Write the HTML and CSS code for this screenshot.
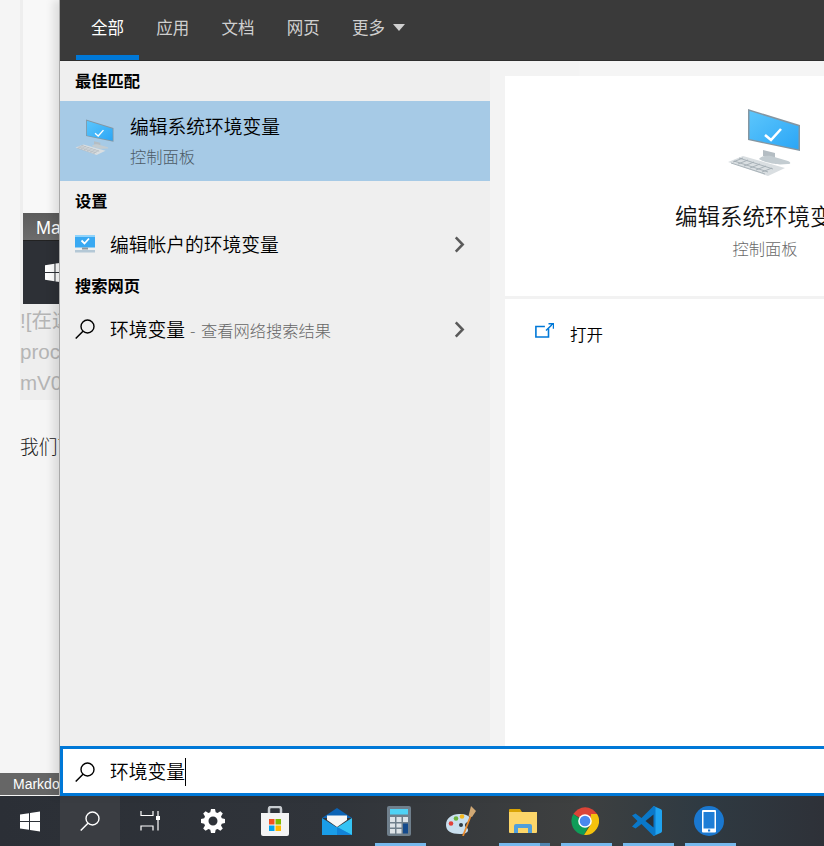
FILE: index.html
```html
<!DOCTYPE html>
<html lang="zh-CN">
<head>
<meta charset="utf-8">
<title>搜索</title>
<link rel="stylesheet" href="styles.css">
</head>
<body>
<svg class="defs" width="0" height="0" aria-hidden="true">
  <defs>
    <linearGradient id="scr" x1="0" y1="0" x2="1" y2="1"><stop offset="0" stop-color="#5cc6fc"/><stop offset="1" stop-color="#2ba6f6"/></linearGradient>
    <symbol id="pc" viewBox="0 0 74 68">
      <path d="M36 42l12 3v6l-12-3z" fill="#b4bdc3"/>
      <path d="M32 51c2-3 8-4 12-3l17 5c3 1 3 3 0 3l-8 0.500c-4 0-16-2-21-5.500z" fill="#c3ccd1"/>
      <path d="M21 1l52 16v26l-52-11z" fill="#8496a2"/>
      <path d="M22.500 3l49 15.300v23l-49-10.300z" fill="url(#scr)"/>
      <path d="M38 27l6 5 10-11" fill="none" stroke="#fff" stroke-width="2.600"/>
      <path d="M1 54l15-6 42 12-17 8z" fill="#d9dee1"/>
      <path d="M6 54l10-4M11 56l10-4M17 58l10-4M23 60l10-4M29 62l10-4M35 64l10-4M12 50l34 11M7 53l34 11M4 55l34 11" stroke="#a3adb3" stroke-width=".9"/>
    </symbol>
    <symbol id="mag" viewBox="0 0 20 20">
      <circle cx="12.500" cy="7.500" r="6.500" fill="none" stroke="currentColor" stroke-width="1.400"/>
      <path d="M8 12.200L.7 19.500" stroke="currentColor" stroke-width="1.500"/>
    </symbol>
    <symbol id="chev" viewBox="0 0 10 16">
      <path d="M1.500 1.200L8 8l-6.500 6.800" fill="none" stroke="currentColor" stroke-width="2.400"/>
    </symbol>
  </defs>
</svg>
<div class="screen">
  <div class="desktop">
    <div class="doc">
      <div class="block">
        <div class="shot">
          <div class="shot-title">Markdown</div>
          <div class="shot-body">
            <svg class="shot-win" viewBox="0 0 20 20"><path d="M0 3l9-1.300V9.500H0zM10 1.500L20 0v9.500H10zM0 10.500h9v7.800L0 17zM10 10.500h10V20l-10-1.500z" fill="#fff"/></svg>
          </div>
        </div>
        <div class="code-line">![在这里</div>
        <div class="code-line">proc</div>
        <div class="code-line">mV0</div>
      </div>
      <p class="para">我们可以</p>
      <div class="status">Markdown</div>
    </div>

    <div class="panel">
      <nav class="tabs">
        <span class="tab active">全部</span>
        <span class="tab">应用</span>
        <span class="tab">文档</span>
        <span class="tab">网页</span>
        <span class="tab">更多<i class="caret-down"></i></span>
      </nav>
      <div class="results">
        <section class="list">
          <h2 class="group first">最佳匹配</h2>
          <div class="best">
            <svg class="best-icon"><use href="#pc"/></svg>
            <div class="best-text">
              <div class="best-title">编辑系统环境变量</div>
              <div class="best-sub">控制面板</div>
            </div>
          </div>
          <h2 class="group">设置</h2>
          <div class="row">
            <svg class="row-icon" viewBox="0 0 20 18">
              <rect x="0" y="0" width="20" height="12.500" fill="#39a9f2"/>
              <rect x="0" y="0" width="20" height="2" fill="#8fd3fb"/>
              <path d="M6.500 5.500l3 3 4.500-5" fill="none" stroke="#fff" stroke-width="1.800"/>
              <rect x="7" y="12.500" width="6" height="2" fill="#8d99a1"/>
              <rect x="0" y="15" width="20" height="2.500" fill="#b4c8d6"/>
            </svg>
            <span class="row-title">编辑帐户的环境变量</span>
            <svg class="chev"><use href="#chev"/></svg>
          </div>
          <h2 class="group tight">搜索网页</h2>
          <div class="row">
            <svg class="row-icon mag"><use href="#mag"/></svg>
            <span class="row-title">环境变量</span>
            <span class="row-hint">- 查看网络搜索结果</span>
            <svg class="chev"><use href="#chev"/></svg>
          </div>
        </section>
        <section class="detail">
          <div class="hero">
            <svg class="hero-icon"><use href="#pc"/></svg>
            <div class="hero-title">编辑系统环境变量</div>
            <div class="hero-sub">控制面板</div>
          </div>
          <div class="actions">
            <div class="action">
              <svg class="open-icon" viewBox="0 0 19 15">
                <path d="M13.500 5.500v8.500H.9V3.500h9" fill="none" stroke="#0078d7" stroke-width="1.600"/>
                <path d="M11 7.500L18 .8M13.500.7h5v5" fill="none" stroke="#0078d7" stroke-width="1.500"/>
              </svg>
              <span>打开</span>
            </div>
          </div>
        </section>
      </div>
      <div class="searchbox">
        <svg class="search-mag"><use href="#mag"/></svg>
        <span class="query">环境变量</span><i class="cursor"></i>
      </div>
    </div>
  </div>

  <footer class="taskbar">
    <div class="tb start">
      <svg width="20" height="21" viewBox="0 0 20 20"><path d="M0 3l9-1.300V9.500H0zM10 1.500L20 0v9.500H10zM0 10.500h9v7.800L0 17zM10 10.500h10V20l-10-1.500z" fill="#fff"/></svg>
    </div>
    <div class="tb search-btn">
      <svg class="tb-mag"><use href="#mag"/></svg>
    </div>
    <div class="tb">
      <svg width="20" height="20" viewBox="0 0 20 20" fill="none" stroke="#fff" stroke-width="1.200">
        <path d="M1 0v4.500M13 0v4.500M.4 4.500h13.200M.4 15h13.200M1 15v4.500M13 15v4.500M18 0v5M18 9v10.500"/>
        <rect x="16" y="5" width="4" height="4" fill="#fff" stroke="none"/>
      </svg>
    </div>
    <div class="apps">
      <div class="app">
        <svg width="24" height="24" viewBox="0 0 24 24"><path fill="#fff" fill-rule="evenodd" d="M10 0h4l.7 3.200 1.900.8L19.400 2.200l2.400 2.400-1.800 2.800.8 1.900 3.200.7v4l-3.200.7-.8 1.900 1.800 2.800-2.400 2.400-2.800-1.800-1.900.8L14 24h-4l-.7-3.200-1.900-.8-2.800 1.800-2.400-2.400L4 16.600l-.8-1.900L0 14v-4l3.200-.7.8-1.900-1.800-2.800 2.400-2.400L7.400 4l1.900-.8zM12 7.500a4.500 4.500 0 1 0 0 9 4.500 4.500 0 0 0 0-9z"/></svg>
      </div>
      <div class="app">
        <svg width="30" height="30" viewBox="0 0 30 30">
          <path d="M9 7V3q0-2 2-2h8q2 0 2 2v4" fill="none" stroke="#c8ccd0" stroke-width="2.500"/>
          <path d="M1 7h28v21q0 2-2 2H3q-2 0-2-2z" fill="#f4f4f4"/>
          <rect x="9" y="13" width="5.500" height="5.500" fill="#f25022"/>
          <rect x="15.500" y="13" width="5.500" height="5.500" fill="#7fba00"/>
          <rect x="9" y="19.500" width="5.500" height="5.500" fill="#00a4ef"/>
          <rect x="15.500" y="19.500" width="5.500" height="5.500" fill="#ffb900"/>
        </svg>
      </div>
      <div class="app">
        <svg width="30" height="27" viewBox="0 0 30 27">
          <path d="M0 10L15 0l15 10z" fill="#0b63b5"/>
          <path d="M5 7.500h20V12l-10 7L5 12z" fill="#f6f6f6"/>
          <path d="M0 10l15 9.500V27H0z" fill="#1a9de8"/>
          <path d="M30 10L15 19.500V27h15z" fill="#35c4f5"/>
          <path d="M0 27l15-8 15 8z" fill="#1a9de8"/>
          <path d="M15 19L30 27H15z" fill="#1283d8"/>
        </svg>
      </div>
      <div class="app running">
        <svg width="24" height="30" viewBox="0 0 24 30">
          <rect width="24" height="30" rx="2" fill="#6f7f8c"/>
          <rect x="3" y="3" width="18" height="5.500" fill="#4fd2f5"/>
          <g fill="#dde3e8">
            <rect x="3" y="11" width="5" height="5"/><rect x="9.500" y="11" width="5" height="5"/><rect x="16" y="11" width="5" height="5"/>
            <rect x="3" y="17.500" width="5" height="4"/><rect x="9.500" y="17.500" width="5" height="4"/>
            <rect x="3" y="23" width="5" height="4.500"/><rect x="9.500" y="23" width="5" height="4.500"/>
          </g>
          <rect x="16" y="17.500" width="5" height="10" fill="#144a8c"/>
        </svg>
      </div>
      <div class="app">
        <svg width="30" height="30" viewBox="0 0 30 30">
          <path d="M0 19C0 12 6 8 13 8c7 0 11 2 11 5 0 3-5 3-5 6s3 2 3 5-4 4-8 4C5 28 0 25 0 19z" fill="#c9dfee"/>
          <circle cx="5" cy="17.500" r="2.300" fill="#e0413a"/>
          <circle cx="10" cy="12.500" r="2.300" fill="#6cb33f"/>
          <circle cx="16" cy="10.500" r="2.300" fill="#f5b81e"/>
          <circle cx="15" cy="19" r="2" fill="#2f3a42"/>
          <path d="M17 30L25 9" stroke="#e88a2e" stroke-width="1.800"/>
          <path d="M22.500 10L25 0l5 5-4 6z" fill="#d0a874"/>
        </svg>
      </div>
      <div class="app running split">
        <svg width="28" height="24" viewBox="0 0 28 24">
          <path d="M0 1q0-1 1-1h10l2 3H0z" fill="#d9a404"/>
          <path d="M0 3h28v20q0 1-1 1H1q-1 0-1-1z" fill="#fcd669"/>
          <path d="M5 24v-7q0-2 2-2h14q2 0 2 2v7h-4v-5H9v5z" fill="#4f9fdc"/>
        </svg>
      </div>
      <div class="app running">
        <svg width="28" height="28" viewBox="0 0 28 28">
          <path d="M14 14L2.300 7A14 14 0 0 1 26.100 7z" fill="#db4437"/>
          <path d="M2.300 7A14 14 0 0 0 13 28l5-10z" fill="#0f9d58"/>
          <path d="M26.100 7A14 14 0 0 1 13 28l7-11V7z" fill="#f4c20d"/>
          <circle cx="14" cy="14" r="6.800" fill="#fff"/>
          <circle cx="14" cy="14" r="5.300" fill="#4a88ee"/>
        </svg>
      </div>
      <div class="app running">
        <svg width="30" height="30" viewBox="0 0 30 30">
          <path d="M21.500 0L29 3.300q1 .5 1 1.700v20q0 1.200-1 1.700L21.500 30l-.5-9V9z" fill="#1fa3f0"/>
          <path d="M21.500 0L9.500 12 3.500 7.500 0 9.500 5.500 15 0 20.500l3.500 2 6-4.500 12 12 2-1V1z" fill="#0a78c9"/>
          <path d="M21.500 8.500L13.500 15l8 6.500z" fill="#2b3036"/>
        </svg>
      </div>
      <div class="app running">
        <svg width="30" height="30" viewBox="0 0 30 30">
          <circle cx="15" cy="15" r="15" fill="#1a78d0"/>
          <rect x="8" y="4" width="14" height="22.500" rx="1" fill="#fff"/>
          <rect x="9.500" y="6" width="11" height="16.500" fill="#1f7ed6"/>
          <rect x="14" y="23.500" width="2.200" height="2" fill="#1a78d0"/>
        </svg>
      </div>
    </div>
  </footer>
</div>
</body>
</html>
```
FILE: styles.css
```css
* { box-sizing: border-box; }
html, body { margin: 0; padding: 0; height: 100%; overflow: hidden; }
body { font-family: "Noto Sans CJK SC", "Liberation Sans", sans-serif; background: #f5f5f5; }
.defs { position: absolute; }
.screen { width: 824px; height: 846px; display: flex; flex-direction: column; overflow: hidden; }
.desktop { flex: 1; min-height: 0; display: flex; }

/* document behind the search flyout */
.doc { width: 60px; flex: none; padding-left: 20px; display: flex; flex-direction: column; overflow: hidden; white-space: nowrap; color: #333; font-family: "Liberation Sans", "Noto Sans CJK SC", sans-serif; background: #f5f5f5; }
.block { width: 60px; height: 400px; flex: none; background: #eeeeee; color: #b5b5b5; font-size: 20.500px; line-height: 31px; }
.shot { margin-left: 3px; width: 60px; height: 304px; padding-top: 213px; background: #f8f8f8; display: flex; flex-direction: column; }
.shot-title { height: 28px; flex: none; padding: 3px 0 0 13px; font-size: 18px; line-height: 24px; color: #fff; background: linear-gradient(#5c5c5c, #6c6c6c); border-bottom: 1px solid #222; }
.shot-body { flex: 1; background: #2d3036; padding: 21px 0 0 22px; }
.shot-win { display: block; width: 21px; height: 21px; }
.code-line { height: 31px; position: relative; top: 1px; }
.para { margin: 32px 0 0; font-size: 18.750px; line-height: 28px; color: #222; font-family: "Noto Sans CJK SC", sans-serif; font-weight: 300; }
.status { margin-top: auto; margin-left: -20px; margin-bottom: 1px; width: 60px; height: 22px; flex: none; padding-left: 13px; font-size: 14px; line-height: 23px; color: #fff; background: #666; }

/* search flyout */
.panel { width: 520px; flex: none; display: flex; flex-direction: column; position: relative; background: #f3f3f3; border-left: 1px solid #a9a9a9; margin-left: -1px; box-shadow: -6px 0 8px rgba(0,0,0,.10); }
.tabs { height: 61px; flex: none; display: flex; gap: 2.250px; padding-left: 16px; background: #3a3a3a; border-bottom: 1px solid #2e2e2e; width: 966px; }
.tab { position: relative; width: 63px; height: 60px; text-align: center; padding-top: 15px; font-size: 16.500px; line-height: 24px; color: #cfcfcf; white-space: nowrap; }
.tab.active { color: #fff; border-bottom: 5px solid #0078d7; }
.caret-down { position: absolute; left: 56px; top: 24px; width: 0; height: 0; border-left: 6.500px solid transparent; border-right: 6.500px solid transparent; border-top: 7px solid #cfcfcf; }

.results { flex: 1; min-height: 0; display: flex; width: 965px; }
.list { width: 430px; flex: none; background: #efefef; display: flex; flex-direction: column; }
.group { margin: 0; height: 40px; flex: none; padding: 7px 0 0 15px; font-size: 16.250px; line-height: 24px; font-weight: 700; color: #000; }
.group.tight { height: 39px; padding-top: 6px; }
.best { height: 80px; flex: none; display: flex; background: #a6cae6; }
.best-icon { width: 39px; height: 36px; margin: 18px 0 0 15px; flex: none; }
.best-text { margin-left: 16px; padding-top: 11px; }
.best-title { font-size: 18.750px; line-height: 28px; color: #000; font-weight: 350; white-space: nowrap; }
.best-sub { font-size: 16.250px; line-height: 24px; margin-top: 4px; color: #4d5b66; font-weight: 300; }
.row { height: 46px; flex: none; display: flex; align-items: center; padding-left: 15px; position: relative; }
.row-icon { width: 20px; height: 18px; flex: none; margin-right: 15px; }
.row-icon.mag { height: 20px; color: #000; }
.row-title { font-size: 18.750px; line-height: 28px; color: #000; font-weight: 350; white-space: nowrap; }
.row-hint { font-size: 16.250px; line-height: 28px; color: #666; font-weight: 300; padding-top: 1px; margin-left: 5px; word-spacing: 2px; white-space: nowrap; }
.chev { position: absolute; left: 394px; top: 15px; width: 11px; height: 17px; color: #5a5a5a; }

.detail { width: 520px; flex: none; margin: 15px 0 0 15px; background: #fff; display: flex; flex-direction: column; }
.hero { height: 220px; flex: none; display: flex; flex-direction: column; align-items: center; }
.hero-icon { width: 74px; height: 68px; margin-top: 32px; flex: none; margin-left: -2px; }
.hero-title { margin-top: 22px; font-size: 22.500px; line-height: 34px; color: #111; font-weight: 350; white-space: nowrap; }
.hero-sub { margin-top: 5px; font-size: 16.250px; line-height: 22px; color: #6a6a6a; font-weight: 300; }
.actions { border-top: 3px solid #f2f2f2; padding: 23px 0 0 30px; }
.action { display: flex; align-items: center; gap: 16px; font-size: 16.500px; line-height: 24px; color: #000; height: 24px; font-weight: 350; }
.open-icon { width: 19px; height: 15px; margin-top: -8px; flex: none; }

.searchbox { height: 50px; flex: none; width: 965px; display: flex; align-items: center; background: #fff; border: 3px solid #0078d7; border-right: 0; padding-left: 12px; }
.search-mag { width: 20px; height: 20px; color: #000; flex: none; margin: 2px 15px 0 0; }
.query { font-size: 18.750px; line-height: 28px; color: #000; font-weight: 350; }
.cursor { display: block; width: 1px; height: 28px; background: #000; margin-top: 1px; }

/* taskbar */
.taskbar { height: 50px; flex: none; display: flex; background: linear-gradient(90deg, #2b2f36 0, #30343a 40%, #3e4040 70%, #2f3a42 85%, #2e3138 100%); }
.tb { width: 60px; flex: none; display: flex; align-items: center; justify-content: center; }
.tb.search-btn { background: #3a3d42; }
.tb-mag { width: 20px; height: 20px; color: #fff; }
.apps { display: flex; padding-left: 2px; }
.app { position: relative; width: 62px; flex: none; display: flex; align-items: center; justify-content: center; }
.app.running::after { content: ""; position: absolute; left: 7px; right: 4px; bottom: 0; height: 3px; background: #76b9ed; }
.app.split::after { right: 14px; }
.app.split::before { content: ""; position: absolute; left: 48px; width: 10px; bottom: 0; height: 3px; background: #4f85b0; }
```
